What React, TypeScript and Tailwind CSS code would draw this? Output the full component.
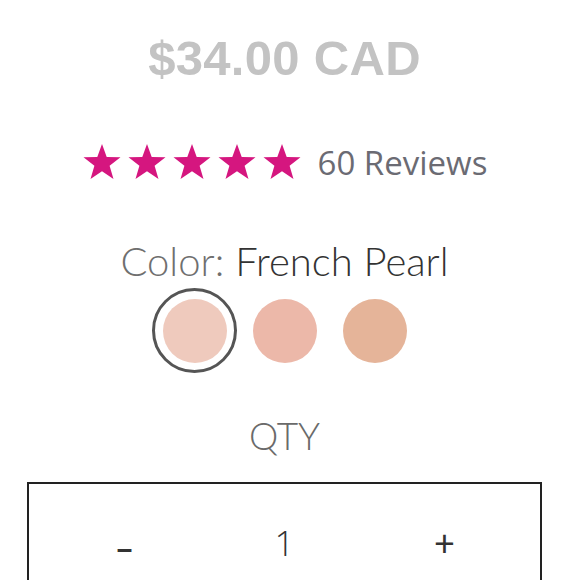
import React from "react";

function Star() {
  return (
    <svg width="40" height="38" viewBox="0 0 24 23" className="block">
      <path
        d="M12 0.6 L14.85 8.4 L23.2 8.6 L16.6 13.7 L18.95 21.8 L12 17.05 L5.05 21.8 L7.4 13.7 L0.8 8.6 L9.15 8.4 Z"
        fill="#d5167f"
      />
    </svg>
  );
}

export default function App() {
  const swatches = [
    { color: "#efcabd", selected: true },
    { color: "#ecb8a9", selected: false },
    { color: "#e5b499", selected: false },
  ];
  return (
    <div className="w-[580px] h-[580px] overflow-hidden bg-white">
      <div className="w-[569px] flex flex-col items-center">
        <div
          className="mt-[34px] text-[49px] leading-none font-bold text-[#c3c3c3] tracking-[0.3px]"
          style={{ fontFamily: '"Liberation Sans", Arial, sans-serif' }}
        >
          $34.00 CAD
        </div>
        <div className="mt-[60px] flex items-center">
          <div className="flex gap-[5px]">
            <Star />
            <Star />
            <Star />
            <Star />
            <Star />
          </div>
          <span
            className="ml-[16px] text-[33px] leading-none text-[#6b6b73]"
            style={{ fontFamily: '"Open Sans", sans-serif' }}
          >
            60 Reviews
          </span>
        </div>
        <div
          className="mt-[60px] text-[40px] leading-none font-light"
          style={{ fontFamily: "Lato, sans-serif" }}
        >
          <span className="text-[#6f6f6f]">Color: </span>
          <span className="text-[#333333]">French Pearl</span>
        </div>
        <div className="mt-[7px] flex gap-[5px]">
          {swatches.map((s, i) => (
            <div
              key={i}
              className={
                "w-[85px] h-[85px] rounded-full flex items-center justify-center " +
                (s.selected ? "border-[3px] border-[#555555]" : "")
              }
            >
              <div
                className="w-[64px] h-[64px] rounded-full"
                style={{ backgroundColor: s.color }}
              />
            </div>
          ))}
        </div>
        <div
          className="mt-[44px] text-[37px] leading-none font-light text-[#6a6a6a]"
          style={{ fontFamily: "Lato, sans-serif" }}
        >
          QTY
        </div>
        <div className="mt-[28px] w-[515px] h-[140px] border-2 border-[#222222]">
          <div className="h-[116px] flex items-center justify-center gap-[120px]">
            <span
              className="w-[40px] mt-[8px] text-center text-[33px] leading-none text-[#333] font-semibold"
              style={{ fontFamily: '"Open Sans", sans-serif' }}
            >
              –
            </span>
            <span
              className="w-[40px] text-center text-[35px] leading-none text-[#333] font-light"
              style={{ fontFamily: '"Open Sans", sans-serif' }}
            >
              1
            </span>
            <span
              className="w-[40px] text-center text-[36px] leading-none text-[#333]"
              style={{ fontFamily: "Lato, sans-serif" }}
            >
              +
            </span>
          </div>
        </div>
      </div>
    </div>
  );
}
